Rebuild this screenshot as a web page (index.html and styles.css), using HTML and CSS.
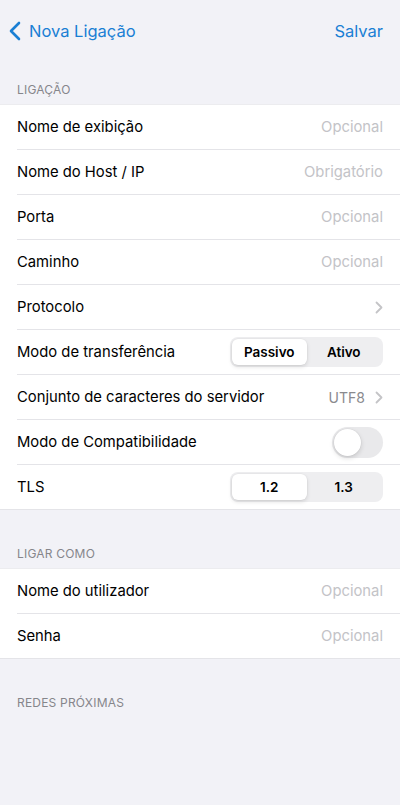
FILE: index.html
```html
<!DOCTYPE html>
<html>
<head>
<title>Nova Ligação</title>
<meta charset="utf-8">
<link rel="stylesheet" href="styles.css">
</head>
<body>

<div class="navbar">
	<a class="back">
		<svg width="12" height="20" viewBox="0 0 12 20"><path d="M10 2 L2 10 L10 18" fill="none" stroke="#1a7fd4" stroke-width="2.6" stroke-linecap="round" stroke-linejoin="round"/></svg>
		<span>Nova Ligação</span>
	</a>
	<a class="save">Salvar</a>
</div>

<div class="section-title">LIGAÇÃO</div>
<div class="group">
	<div class="row"><span class="label">Nome de exibição</span><span class="hint">Opcional</span></div>
	<div class="row"><span class="label">Nome do Host / IP</span><span class="hint">Obrigatório</span></div>
	<div class="row"><span class="label">Porta</span><span class="hint">Opcional</span></div>
	<div class="row"><span class="label">Caminho</span><span class="hint">Opcional</span></div>
	<div class="row"><span class="label">Protocolo</span><span class="chev"><svg width="8" height="13" viewBox="0 0 8 13"><path d="M1.5 1.5 L6.5 6.5 L1.5 11.5" fill="none" stroke="#c4c4c7" stroke-width="1.8" stroke-linecap="round" stroke-linejoin="round"/></svg></span></div>
	<div class="row">
		<span class="label">Modo de transferência</span>
		<div class="segmented">
			<div class="seg active">Passivo</div>
			<div class="seg">Ativo</div>
		</div>
	</div>
	<div class="row"><span class="label">Conjunto de caracteres do servidor</span><span class="value">UTF8<svg width="8" height="13" viewBox="0 0 8 13"><path d="M1.5 1.5 L6.5 6.5 L1.5 11.5" fill="none" stroke="#c4c4c7" stroke-width="1.8" stroke-linecap="round" stroke-linejoin="round"/></svg></span></div>
	<div class="row"><span class="label">Modo de Compatibilidade</span><div class="toggle"><div class="knob"></div></div></div>
	<div class="row">
		<span class="label">TLS</span>
		<div class="segmented">
			<div class="seg active">1.2</div>
			<div class="seg">1.3</div>
		</div>
	</div>
</div>

<div class="section-title">LIGAR COMO</div>
<div class="group">
	<div class="row"><span class="label">Nome do utilizador</span><span class="hint">Opcional</span></div>
	<div class="row"><span class="label">Senha</span><span class="hint">Opcional</span></div>
</div>

<div class="section-title">REDES PRÓXIMAS</div>

</body>
</html>
```

FILE: styles.css
```css
body{
	margin: 0;
	background: #f2f2f7;
	font-family: Inter, "Noto Sans", sans-serif;
	color: #000;
	height: 805px;
	overflow: hidden;
}

.navbar{
	height: 64px;
	display: flex;
	align-items: center;
	justify-content: space-between;
	padding: 0 17px 2px 9px;
	box-sizing: border-box;
}

.back, .save{
	color: #1a7fd4;
	font-size: 16.5px;
	display: flex;
	align-items: center;
	gap: 8px;
}

.section-title{
	height: 40px;
	box-sizing: border-box;
	font-size: 12px;
	line-height: 14px;
	color: #86868b;
	letter-spacing: 0.2px;
	padding: 19px 17px 0;
}

.group{
	background: #fff;
	border-top: 1px solid #ececef;
	border-bottom: 1px solid #e4e4e8;
	margin-bottom: 18px;
}

.row{
	height: 45px;
	margin-left: 17px;
	padding-right: 17px;
	display: flex;
	align-items: center;
	justify-content: space-between;
	border-bottom: 1px solid #e4e4e8;
	box-sizing: border-box;
	font-size: 14.8px;
}

.row:last-child{
	border-bottom: none;
	height: 44px;
}

.hint{
	color: #c3c3c7;
}

.value{
	color: #8a8a8e;
	display: flex;
	align-items: center;
	gap: 10px;
	font-size: 14px;
}

.chev{
	display: flex;
}

.segmented{
	width: 153px;
	height: 30px;
	background: #eeeef0;
	border-radius: 8px;
	display: flex;
	padding: 2px;
	box-sizing: border-box;
}

.seg{
	flex: 1;
	display: flex;
	align-items: center;
	justify-content: center;
	font-size: 13.5px;
	font-weight: 600;
	border-radius: 6px;
}

.seg.active{
	background: #fff;
	box-shadow: 0 2px 4px rgba(0,0,0,0.12), 0 0 0 0.5px rgba(0,0,0,0.04);
}

.toggle{
	width: 51px;
	height: 31px;
	background: #e9e9eb;
	border-radius: 16px;
	padding: 2px;
	box-sizing: border-box;
}

.knob{
	width: 27px;
	height: 27px;
	background: #fff;
	border-radius: 50%;
	box-shadow: 0 2px 5px rgba(0,0,0,0.15), 0 0 0 0.5px rgba(0,0,0,0.05);
}
```
